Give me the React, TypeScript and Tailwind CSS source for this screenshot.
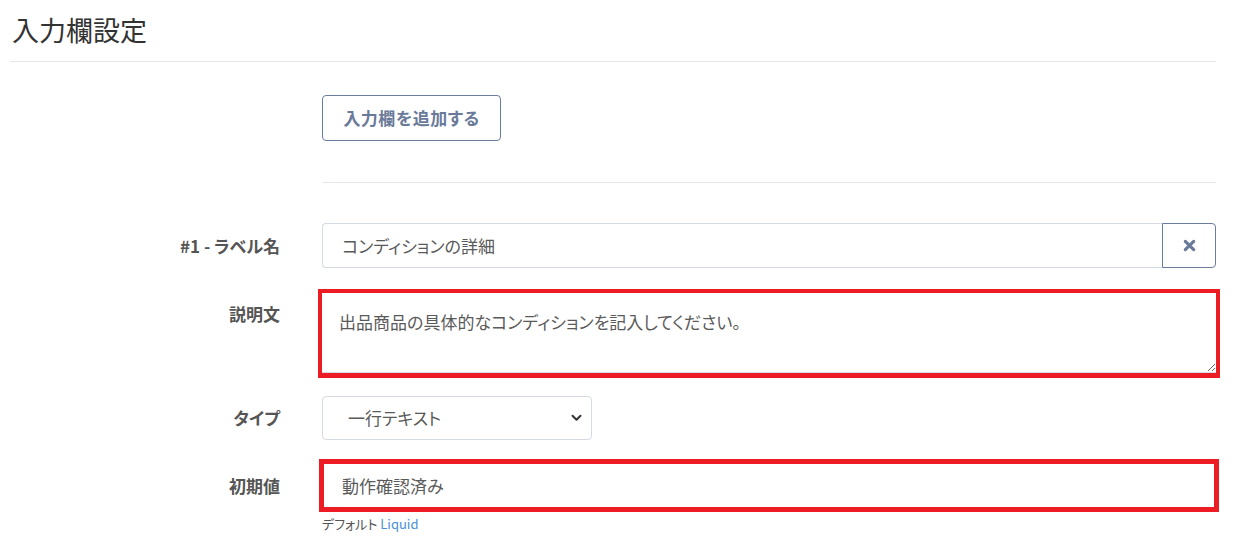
import React from "react";

export default function App() {
  const font = { fontFamily: '"Noto Sans CJK JP", "Noto Sans", sans-serif' };
  return (
    <div className="min-h-[553px] w-[1236px] bg-white pl-[10px] pr-[20px] [font-feature-settings:'palt']" style={font}>
      <div className="pt-[13px] pb-[14px] border-b border-[#e6e6e6]">
        <h1 className="pl-[2px] text-[27px] leading-[34px] text-[#333] font-normal">入力欄設定</h1>
      </div>

      <div className="grid grid-cols-[270px_1fr] gap-x-[42px]">
        <div />
        <div className="pt-[33px]">
          <button className="h-[46px] w-[179px] rounded-[4px] border border-[#6a7d9f] bg-white text-[17px] font-bold tracking-[0.5px] text-[#6a7a99] [font-feature-settings:'normal']">
            入力欄を追加する
          </button>
          <div className="mt-[41px] border-t border-[#e6e6ec]" />
        </div>

        {/* Row 1 */}
        <div className="mt-[40px] flex h-[45px] items-center justify-end text-[17px] font-bold text-[#555]">
          #1 - ラベル名
        </div>
        <div className="mt-[40px] flex h-[45px]">
          <input
            readOnly
            value="コンディションの詳細"
            className="h-[45px] flex-1 rounded-l-[4px] border border-r-0 border-[#d5dae3] pl-[19px] text-[17px] text-[#5a5a5a] outline-none [font-feature-settings:'palt']"
            style={font}
          />
          <button className="flex h-[45px] w-[54px] items-center justify-center rounded-r-[4px] border border-[#6a7d9f] bg-white">
            <svg width="13" height="13" viewBox="0 0 14 14">
              <path d="M2.5 2.5 L11.5 11.5 M11.5 2.5 L2.5 11.5" stroke="#6a7a99" strokeWidth="3.4" strokeLinecap="round" />
            </svg>
          </button>
        </div>

        {/* Row 2 */}
        <div className="mt-[21px] pt-[13px] text-right text-[17px] font-bold leading-[24px] text-[#555] [font-feature-settings:'normal']">
          説明文
        </div>
        <div className="mt-[21px] -mx-[4px] border-4 border-b-[5px] border-[#ed1c24]">
          <textarea
            readOnly
            value="出品商品の具体的なコンディションを記入してください。"
            className="block h-[80px] w-full resize-y border-b border-[#d5dae3] pl-[17px] pt-[17px] text-[17px] leading-[24px] text-[#5a5a5a] outline-none [font-feature-settings:'palt']"
            style={font}
          />
        </div>

        {/* Row 3 */}
        <div className="mt-[18px] flex h-[44px] items-center justify-end text-[17px] font-bold text-[#555]">
          タイプ
        </div>
        <div className="mt-[18px]">
          <div className="relative flex h-[44px] w-[270px] items-center rounded-[4px] border border-[#d5dae3] pl-[25px] text-[17px] text-[#5a5a5a]">
            一行テキスト
            <svg className="absolute right-[9px] top-[17px]" width="11" height="8" viewBox="0 0 11 8">
              <path d="M1.5 1.8 L5.5 5.8 L9.5 1.8" fill="none" stroke="#333" strokeWidth="2" strokeLinecap="round" strokeLinejoin="round" />
            </svg>
          </div>
        </div>

        {/* Row 4 */}
        <div className="mt-[19px] flex h-[53px] items-center justify-end text-[17px] font-bold text-[#555] [font-feature-settings:'normal']">
          初期値
        </div>
        <div className="mt-[19px]">
          <div className="-mx-[3px] flex h-[53px] items-center border-[5px] border-[#ed1c24] pl-[18px] text-[17px] text-[#5a5a5a] [font-feature-settings:'normal']">
            動作確認済み
          </div>
          <div className="mt-[2px] text-[13px] leading-[20px] text-[#555] [font-feature-settings:'normal']">
            デフォルト <span className="text-[#4a90d9]">Liquid</span>
          </div>
        </div>
      </div>
    </div>
  );
}
